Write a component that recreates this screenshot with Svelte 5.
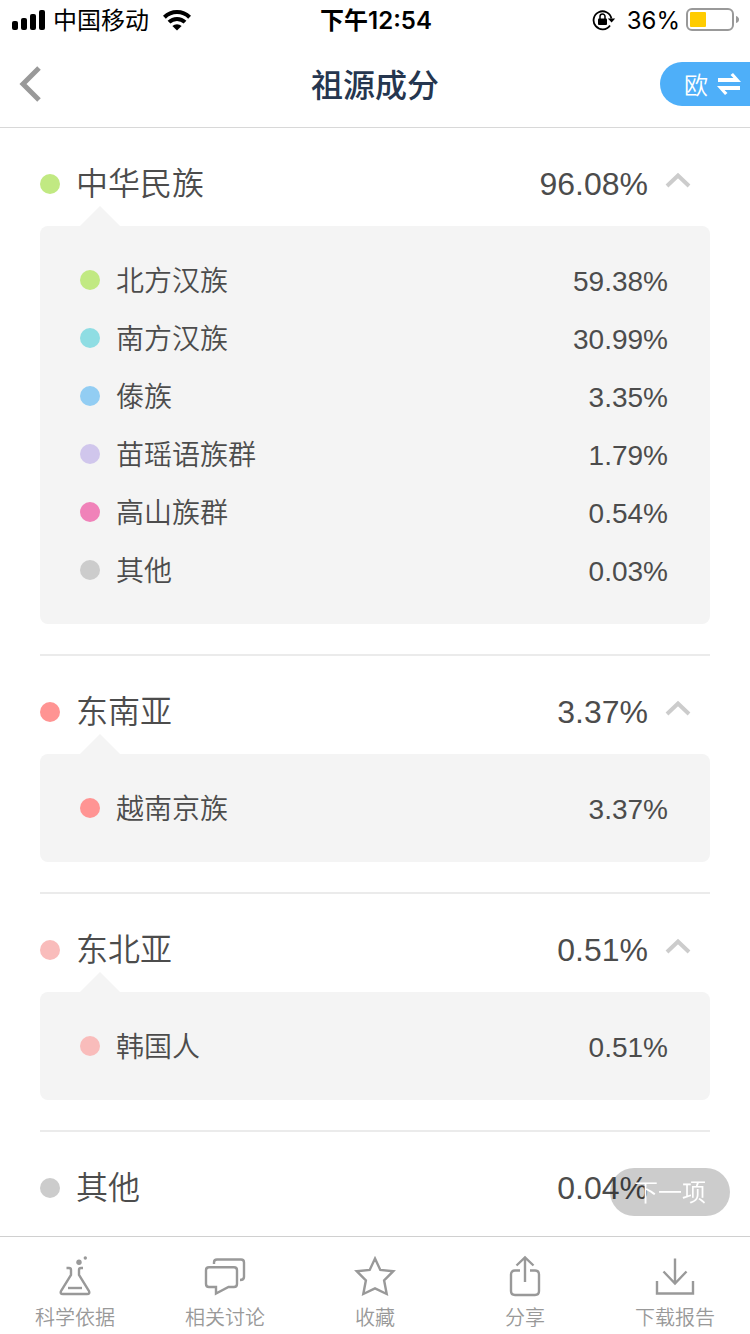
<script lang="ts">
  interface Ancestry {
    name: string;
    percent: string;
    color: string;
  }

  interface Region extends Ancestry {
    open: boolean;
    children: Ancestry[];
  }

  let regions: Region[] = $state([
    {
      name: "中华民族",
      percent: "96.08%",
      color: "#c1e982",
      open: true,
      children: [
        { name: "北方汉族", percent: "59.38%", color: "#c1e982" },
        { name: "南方汉族", percent: "30.99%", color: "#8fdde3" },
        { name: "傣族", percent: "3.35%", color: "#92cdf3" },
        { name: "苗瑶语族群", percent: "1.79%", color: "#d0c6ec" },
        { name: "高山族群", percent: "0.54%", color: "#f082b9" },
        { name: "其他", percent: "0.03%", color: "#cccccc" },
      ],
    },
    {
      name: "东南亚",
      percent: "3.37%",
      color: "#ff9493",
      open: true,
      children: [{ name: "越南京族", percent: "3.37%", color: "#ff9493" }],
    },
    {
      name: "东北亚",
      percent: "0.51%",
      color: "#f9bcbb",
      open: true,
      children: [{ name: "韩国人", percent: "0.51%", color: "#f9bcbb" }],
    },
    { name: "其他", percent: "0.04%", color: "#cccccc", open: false, children: [] },
  ]);

  const tabs = [
    { icon: "flask", label: "科学依据" },
    { icon: "chat", label: "相关讨论" },
    { icon: "star", label: "收藏" },
    { icon: "share", label: "分享" },
    { icon: "download", label: "下载报告" },
  ];
</script>

<div class="app">
  <div class="status">
    <div class="status-side">
      <svg width="34" height="22" viewBox="0 0 34 22" aria-hidden="true">
        <rect x="0" y="12" width="6" height="9" rx="2" />
        <rect x="9" y="9" width="6" height="12" rx="2" />
        <rect x="18" y="5" width="6" height="16" rx="2" />
        <rect x="27" y="1" width="6" height="20" rx="2" />
      </svg>
      <span class="carrier">中国移动</span>
      <svg width="28" height="22" viewBox="0 0 28 22" aria-hidden="true">
        <g fill="none" stroke="#000" stroke-width="4">
          <path d="M1.4 8.2a18 18 0 0 1 25.2 0" />
          <path d="M6 13.2a11.4 11.4 0 0 1 16 0" />
        </g>
        <path d="M9.4 17a6.6 6.600 0 0 1 9.2 0L14 21.4z" />
      </svg>
    </div>
    <span class="time">下午12:54</span>
    <div class="status-side status-right">
      <svg class="lock" width="24" height="22" viewBox="0 0 24 22" aria-hidden="true">
        <path
          d="M18 16.400A9 9 0 1 1 19.400 9.500"
          fill="none"
          stroke="#000"
          stroke-width="1.800"
        />
        <path d="M15.800 9.400h7.400L19.600 13.500z" />
        <rect x="6" y="9.400" width="9" height="6.600" rx="1" />
        <path d="M8 10V7.500a2.500 2.500 0 0 1 5 0V10" fill="none" stroke="#000" stroke-width="1.500" />
      </svg>
      <span class="charge">36%</span>
      <svg width="54" height="24" viewBox="0 0 54 24" aria-hidden="true">
        <rect
          x="1"
          y="1"
          width="46"
          height="21"
          rx="5"
          fill="none"
          stroke="#999"
          stroke-width="2"
        />
        <rect x="4" y="4" width="16" height="15" rx="1" fill="#fc0" />
        <path d="M50 8q3 1 3 3.500t-3 3.500z" fill="#999" />
      </svg>
    </div>
  </div>

  <header class="nav">
    <button class="back" aria-label="返回">
      <svg width="24" height="36" viewBox="0 0 24 36" aria-hidden="true">
        <path d="M20 2L4 18l16 16" fill="none" stroke="#999" stroke-width="5" />
      </svg>
    </button>
    <h1>祖源成分</h1>
    <button class="switch">
      欧
      <svg width="24" height="24" viewBox="0 0 24 24" aria-hidden="true">
        <path d="M1 6h15.500L13.500 3 16 1l8 9H1z" fill="#fff" />
        <path d="M23 18H7.500l3 3L8 23l-8-9h23z" fill="#fff" />
      </svg>
    </button>
  </header>

  <main>
    {#each regions as region, i (i)}
      <section>
        <button
          class="region"
          aria-expanded={region.open}
          onclick={() => (region.open = !region.open)}
        >
          <span class="dot" style:background={region.color}></span>
          <span class="name">{region.name}</span>
          <span class="percent">{region.percent}</span>
          <span class="arrow" class:arrow-closed={!region.open}>
            {#if region.children.length > 0}
              <svg width="26" height="16" viewBox="0 0 26 16" aria-hidden="true">
                <path d="M2 14L13 3.500 24 14" fill="none" stroke="#ccc" stroke-width="4" />
              </svg>
            {/if}
          </span>
        </button>
        {#if region.open && region.children.length > 0}
          <ul>
            {#each region.children as child (child.name)}
              <li>
                <span class="dot" style:background={child.color}></span>
                <span class="name">{child.name}</span>
                <span class="percent">{child.percent}</span>
              </li>
            {/each}
          </ul>
        {/if}
      </section>
    {/each}
  </main>

  <button class="next">下一项</button>

  <nav class="tabs">
    {#each tabs as tab (tab.icon)}
      <button class="tab">
        <svg
          width="44"
          height="44"
          viewBox="0 0 44 44"
          fill="none"
          stroke="#999"
          stroke-width="2.400"
          aria-hidden="true"
        >
          {#if tab.icon === "flask"}
            <path
              d="M13.500 15H16q2 0 2 2v5L8.300 37.500Q6.500 41 10 41H34q3.500 0 1.700-3.500L26 22v-5q0-2 2-2h2"
            />
            <path d="M15 35h14" />
            <circle cx="26" cy="9.300" r="2.700" fill="#999" stroke="none" />
            <circle cx="32.300" cy="5" r="1.700" fill="#999" stroke="none" />
          {:else if tab.icon === "chat"}
            <path
              d="M6 14.300h25q3 0 3 3V31q0 3-3 3h-5.500L13 40.500V34H6q-3 0-3-3V17.300q0-3 3-3z"
            />
            <path d="M11 11V9.500q0-3 3-3h24q3 0 3 3V24q0 3-4 3" />
          {:else if tab.icon === "star"}
            <path
              d="M22 5.500l5.300 11.400 13 1.300-9.200 9.100 2.600 13.700L22 35.400 10.300 41l2.600-13.700-9.200-9.100 13-1.300z"
            />
          {:else if tab.icon === "share"}
            <path d="M17 17.500h-5q-4 0-4 4V38q0 4 4 4h20q4 0 4-4V21.500q0-4-4-4h-5" />
            <path d="M22 29V5M13.500 12.500L22 4.500l8.500 8" />
          {:else}
            <path d="M4 28v12.500h36V28" />
            <path d="M22 5.500V31M10.500 18.500L22 30.500l11.500-12" />
          {/if}
        </svg>
        {tab.label}
      </button>
    {/each}
  </nav>
</div>

<style>
  :global(body) {
    margin: 0;
    background: #fff;
  }
  .app {
    display: flex;
    flex-direction: column;
    height: 100vh;
    color: #4c4c4c;
    font-family: "Liberation Sans", "Noto Sans CJK SC", sans-serif;
  }
  button {
    margin: 0;
    padding: 0;
    border: 0;
    background: none;
    color: inherit;
    font: inherit;
    cursor: pointer;
  }
  svg {
    display: block;
    flex: none;
  }

  .status {
    display: grid;
    grid-template-columns: 1fr auto 1fr;
    align-items: center;
    flex: none;
    height: 40px;
    padding: 0 10px 0 12px;
    color: #000;
    font-family: Inter, "Noto Sans CJK SC", sans-serif;
    font-size: 24px;
    line-height: 36px;
  }
  .status span {
    padding-top: 2px;
  }
  .status-side {
    display: flex;
    align-items: center;
  }
  .status-right {
    justify-content: flex-end;
  }
  .carrier {
    margin: 0 14px 0 7px;
  }
  .time {
    font-weight: 600;
  }
  .lock {
    margin-right: 11px;
  }
  .charge {
    margin-right: 6px;
  }

  .nav {
    display: grid;
    grid-template-columns: 1fr auto 1fr;
    align-items: center;
    flex: none;
    height: 87px;
    border-bottom: 1px solid #d8d8d8;
  }
  .back {
    justify-self: start;
    padding: 8px 19px;
  }
  h1 {
    margin: 0;
    padding-top: 4px;
    color: #25364f;
    font-size: 32px;
    font-weight: 500;
    line-height: 44px;
  }
  .switch {
    display: flex;
    align-items: center;
    justify-self: end;
    gap: 9px;
    height: 44px;
    padding: 0 9px 0 24px;
    border-radius: 22px 0 0 22px;
    background: #4eaff9;
    color: #fff;
    font-size: 24px;
    font-weight: 350;
  }

  main {
    flex: 1;
    min-height: 0;
    overflow-y: auto;
    padding: 0 40px;
    scrollbar-width: none;
  }
  section + section {
    margin-top: 30px;
    border-top: 2px solid #ebebeb;
  }
  .region {
    display: flex;
    align-items: center;
    box-sizing: border-box;
    width: 100%;
    height: 98px;
    padding: 14px 19px 0 0;
    font-size: 32px;
    line-height: 48px;
    text-align: left;
  }
  .dot {
    flex: none;
    width: 20px;
    height: 20px;
    margin-right: 16px;
    border-radius: 50%;
  }
  .name {
    flex: 1;
    font-weight: 350;
  }
  .arrow {
    width: 26px;
    margin: 0 0 8px 17px;
  }
  .arrow-closed svg {
    transform: rotate(180deg);
  }
  ul {
    position: relative;
    margin: 0;
    padding: 25px 42px 25px 40px;
    border-radius: 8px;
    background: #f4f4f4;
    list-style: none;
  }
  /* pointer towards the region heading */
  ul::before {
    content: "";
    position: absolute;
    bottom: 100%;
    left: 40px;
    border: 20px solid transparent;
    border-top: 0;
    border-bottom-color: #f4f4f4;
  }
  li {
    display: flex;
    align-items: center;
    height: 58px;
    font-size: 28px;
    line-height: 40px;
  }
  li .name,
  li .percent {
    padding-top: 3px;
  }

  .next {
    position: fixed;
    right: 20px;
    bottom: 118px;
    width: 120px;
    height: 48px;
    padding-bottom: 4px;
    border-radius: 24px;
    background: rgba(0, 0, 0, 0.2);
    color: #fff;
    font-size: 24px;
    font-weight: 350;
  }

  .tabs {
    display: grid;
    grid-template-columns: repeat(5, 1fr);
    flex: none;
    border-top: 1px solid #d0d0d0;
    background: #fff;
  }
  .tab {
    display: flex;
    flex-direction: column;
    align-items: center;
    gap: 8px;
    padding: 16px 0 3px;
    color: #999;
    font-size: 20px;
    font-weight: 350;
    line-height: 26px;
  }
</style>
